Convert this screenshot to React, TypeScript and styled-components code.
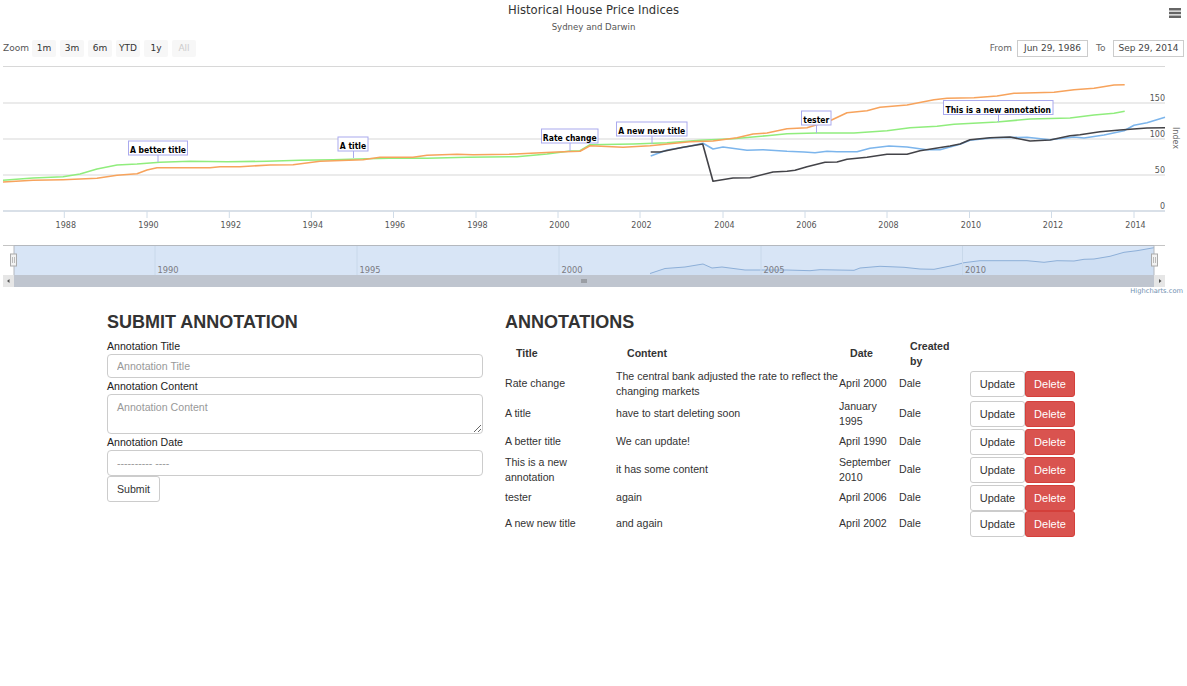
import React from "react";
import styled, { createGlobalStyle } from "styled-components";

const CHART_FONT = `"DejaVu Sans", Verdana, sans-serif`;

const GlobalStyle = createGlobalStyle`
  html, body {
    margin: 0;
    padding: 0;
    background: #fff;
    font-family: "Liberation Sans", Arial, sans-serif;
    font-size: 10.6px;
    line-height: 15px;
    color: #333;
  }
`;

const ChartBlock = styled.section`
  position: relative;
  height: 297px;
`;

const ChartTitle = styled.h1`
  margin: 0;
  padding-top: 3px;
  height: 16px;
  font-family: ${CHART_FONT};
  font-size: 11.6px;
  line-height: 15px;
  font-weight: 400;
  text-align: center;
  color: #333;
`;

const ChartSubtitle = styled.h2`
  margin: 1px 0 0;
  height: 20px;
  font-family: ${CHART_FONT};
  font-size: 8.6px;
  line-height: 14px;
  font-weight: 400;
  text-align: center;
  color: #555;
`;

const MenuButton = styled.svg`
  position: absolute;
  top: 8px;
  left: 1169px;
`;

const Toolbar = styled.div`
  display: flex;
  align-items: center;
  height: 17px;
  padding: 0 3px;
  font-family: ${CHART_FONT};
  font-size: 9px;
  color: #555;
`;

const ZoomLabel = styled.span`
  width: 29px;
`;

const ZoomButton = styled.span<{ $off?: boolean }>`
  width: 24px;
  height: 17px;
  margin-right: 4px;
  line-height: 17px;
  text-align: center;
  background: #f7f7f7;
  border-radius: 2px;
  color: ${(p) => (p.$off ? "#cccccc" : "#333")};
`;

const RangeGroup = styled.div`
  display: flex;
  align-items: center;
  margin-left: auto;
`;

const RangeLabel = styled.span`
  min-width: 12px;
  margin: 0 5px 0 8px;
  color: #666;
`;

const RangeInput = styled.span`
  box-sizing: border-box;
  width: 71px;
  height: 17px;
  line-height: 15px;
  text-align: center;
  border: 1px solid #ccc;
  color: #444;
`;

const ChartSvg = styled.svg`
  display: block;
  position: absolute;
  left: 0;
  top: 60px;
  font-family: ${CHART_FONT};
`;

const Content = styled.main`
  display: flex;
  gap: 22px;
  padding: 15px 0 0 107px;
`;

const FormColumn = styled.form`
  width: 376px;
`;

const TableColumn = styled.div`
  width: 570px;
`;

const Heading = styled.h3`
  margin: 0 0 6px;
  font-size: 18px;
  line-height: 20px;
  font-weight: 700;
  color: #333;
`;

const FieldLabel = styled.label`
  display: block;
  height: 15.5px;
  line-height: 17px;
  color: #222;
`;

const TextInput = styled.input<{ $tall?: boolean }>`
  display: block;
  box-sizing: border-box;
  width: 100%;
  height: ${(p) => (p.$tall ? 26 : 24.5)}px;
  padding: 0 9px;
  font: inherit;
  color: #555;
  background: #fff;
  border: 1px solid #ccc;
  border-radius: 4px;
  outline: none;

  &::placeholder {
    color: #999;
  }
`;

const TextArea = styled.textarea`
  display: block;
  box-sizing: border-box;
  width: 100%;
  height: 40.5px;
  padding: 5px 9px;
  font: inherit;
  color: #555;
  background: #fff;
  border: 1px solid #ccc;
  border-radius: 4px;
  outline: none;

  &::placeholder {
    color: #999;
  }
`;

const ActionButton = styled.button<{ $danger?: boolean }>`
  display: inline-block;
  box-sizing: border-box;
  height: 26px;
  padding: 0;
  font: inherit;
  vertical-align: middle;
  border-radius: 3px;
  border: 1px solid ${(p) => (p.$danger ? "#d43f3a" : "#ccc")};
  background: ${(p) => (p.$danger ? "#d9534f" : "#fff")};
  color: ${(p) => (p.$danger ? "#fff" : "#333")};
  width: ${(p) => (p.$danger ? 50 : 55)}px;
`;

const SubmitButton = styled(ActionButton)`
  display: block;
  width: 53px;
  margin-top: 0.5px;
`;

const AnnotationTable = styled.table`
  width: 570px;
  table-layout: fixed;
  border-collapse: collapse;
  border-spacing: 0;
  margin-top: 7px;
`;

const HeadCell = styled.th`
  padding: 0 11px 1px;
  line-height: 14.5px;
  text-align: left;
  vertical-align: middle;
  font-weight: 700;
  color: #333;
`;

const Cell = styled.td`
  padding: 0 0 1px;
  line-height: 14.5px;
  vertical-align: middle;
  color: #333;
`;

const ActionCell = styled(Cell)`
  padding: 0;
  white-space: nowrap;
  font-size: 0;

  button {
    font-size: 11px;
  }
`;

type Point = [number, number];

const green: Point[] = [
  [3, 180.3], [33, 178], [63, 176.7], [80, 174], [97, 169], [117, 165], [137, 164], [160, 162.3],
  [190, 161.3], [227, 161.7], [267, 161.3], [300, 160.3], [333, 159.7], [367, 158.7], [400, 158],
  [427, 158.3], [467, 157.3], [517, 156.7], [547, 154], [570, 151], [580, 150.7], [590, 144.7],
  [633, 144], [667, 142.7], [700, 140.3], [733, 138.7], [767, 135.7], [787, 133.7], [817, 133],
  [854, 133], [887, 130.7], [910, 127.7], [937, 126.3], [954, 124.3], [997, 122], [1030, 119],
  [1070, 118], [1094, 115], [1114, 113.3], [1124.7, 111.3],
];

const orange: Point[] = [
  [3, 182], [33, 180.3], [63, 179.7], [97, 178.3], [117, 175.3], [137, 173.7], [147, 170], [157, 167.7],
  [210, 167.7], [220, 166.7], [240, 166.7], [270, 165], [293, 164.7], [320, 161.3], [363, 159.7],
  [380, 157.3], [413, 157.3], [427, 155.3], [457, 154.3], [473, 154.7], [510, 154.3], [557, 152],
  [580, 151.3], [590, 145.7], [623, 147.3], [650, 145.7], [690, 141.7], [713, 141], [737, 137.7],
  [753, 134], [767, 133], [787, 128.7], [807, 127.7], [830, 120.7], [847, 112.7], [867, 110.7],
  [880, 107.3], [907, 105], [934, 99.7], [947, 98.3], [974, 97.7], [997, 96], [1014, 93.3],
  [1054, 92.3], [1074, 89.7], [1094, 88.3], [1114, 85], [1124.7, 84.7],
];

const blue: Point[] = [
  [650.7, 156], [667, 150], [687, 146.7], [703, 143.3], [713, 149], [723, 147], [747, 150.3],
  [763, 149.7], [787, 151.3], [804, 152], [815, 152.7], [827, 151.3], [837, 151.7], [857, 151.7],
  [870, 148.3], [889, 146], [907, 147], [927, 149.7], [940, 149.7], [960, 144.3], [970, 140.3],
  [994, 137.7], [1027, 137.3], [1050, 139.7], [1074, 137], [1084, 138], [1104, 135], [1124, 130.7],
  [1134, 125.3], [1147, 122.7], [1165, 117.3],
];

const black: Point[] = [
  [650.7, 152], [660, 152], [683, 147.3], [702.7, 144], [713, 181.3], [733, 178], [750, 177.7],
  [773, 172], [787, 171.3], [795, 170.3], [807, 166.7], [825, 162.3], [837, 162], [847, 159.3],
  [867, 157.3], [887, 154.3], [907, 154.3], [920, 150.7], [950, 146], [960, 144], [970, 139.7],
  [990, 137.7], [1010, 137], [1030, 141], [1050, 140], [1070, 135.7], [1080, 134.7], [1100, 131.7],
  [1120, 130], [1147, 128], [1165, 127.7],
];

const navigatorLine: Point[] = [
  [650, 273.5], [665, 268.5], [685, 267], [703, 264], [712, 268], [722, 267], [745, 270], [787, 270],
  [810, 270.7], [820, 269.7], [854, 270.3], [860, 268], [880, 266.3], [904, 267.3], [920, 269],
  [934, 269.3], [954, 265.3], [964, 262.7], [980, 260.7], [1027, 260.7], [1044, 262.3], [1057, 260.7],
  [1074, 261], [1084, 259.3], [1094, 259], [1110, 256.3], [1124, 252.3], [1137, 250.7], [1154, 247.7],
];

const toPoints = (line: Point[]) => line.map((p) => p.join(",")).join(" ");

const gridRows = [66.5, 103, 139, 175];
const yLabels = [
  { y: 101, text: "150" },
  { y: 137, text: "100" },
  { y: 173, text: "50" },
  { y: 209, text: "0" },
];
const xTicks = [
  [64.3, "1988"], [147, "1990"], [229.3, "1992"], [311.3, "1994"], [393.5, "1996"], [476, "1998"],
  [558, "2000"], [640, "2002"], [723, "2004"], [805, "2006"], [887, "2008"], [969.5, "2010"],
  [1051.5, "2012"], [1134, "2014"],
] as const;
const navTicks = [
  [155, "1990"], [357, "1995"], [559, "2000"], [761, "2005"], [962.5, "2010"],
] as const;

const flags = [
  { x: 128.5, y: 141, w: 59, tip: 158, end: 162, text: "A better title" },
  { x: 338, y: 137, w: 30, tip: 353.5, end: 158, text: "A title" },
  { x: 541.5, y: 129, w: 56.5, tip: 570, end: 151, text: "Rate change" },
  { x: 616.5, y: 122, w: 70.5, tip: 652, end: 144, text: "A new new title" },
  { x: 801.5, y: 111, w: 29.5, tip: 816.5, end: 133, text: "tester" },
  { x: 943.5, y: 100.5, w: 109.5, tip: 998.5, end: 122, text: "This is a new annotation" },
];

const rows = [
  { title: "Rate change", content: "The central bank adjusted the rate to reflect the changing markets", date: "April 2000" },
  { title: "A title", content: "have to start deleting soon", date: "January 1995" },
  { title: "A better title", content: "We can update!", date: "April 1990" },
  { title: "This is a new annotation", content: "it has some content", date: "September 2010" },
  { title: "tester", content: "again", date: "April 2006" },
  { title: "A new new title", content: "and again", date: "April 2002" },
];

const HouseChart: React.FC = () => (
  <ChartSvg width={1187} height={237} viewBox="0 60 1187 237">
    {gridRows.map((y) => (
      <line key={y} x1={3} x2={1165} y1={y} y2={y} stroke="#d8d8d8" strokeWidth={1.2} />
    ))}
    <line x1={3} x2={1165} y1={211} y2={211} stroke="#ccd6e0" strokeWidth={1.4} />
    {xTicks.map(([x, label]) => (
      <g key={label}>
        <line x1={x} x2={x} y1={211} y2={218} stroke="#d0dce8" />
        <text x={x + 1.5} y={227.5} fontSize={8} textAnchor="middle" fill="#555">
          {label}
        </text>
      </g>
    ))}
    {yLabels.map((l) => (
      <text key={l.text} x={1165} y={l.y} fontSize={8} textAnchor="end" fill="#555">
        {l.text}
      </text>
    ))}
    <text x={1173} y={138} fontSize={8} textAnchor="middle" fill="#666" transform="rotate(90 1173 138)">
      Index
    </text>

    <polyline points={toPoints(green)} fill="none" stroke="#90ed7d" strokeWidth={1.6} strokeLinejoin="round" />
    <polyline points={toPoints(blue)} fill="none" stroke="#7cb5ec" strokeWidth={1.6} strokeLinejoin="round" />
    <polyline points={toPoints(black)} fill="none" stroke="#434348" strokeWidth={1.6} strokeLinejoin="round" />
    <polyline points={toPoints(orange)} fill="none" stroke="#f7a35c" strokeWidth={1.6} strokeLinejoin="round" />

    {flags.map((f) => (
      <g key={f.text}>
        <line x1={f.tip} x2={f.tip} y1={f.y + 14} y2={f.end} stroke="#aaaaee" />
        <rect x={f.x} y={f.y} width={f.w} height={14} fill="#fff" stroke="#aaaaee" />
        <text
          x={f.x + f.w / 2}
          y={f.y + 12}
          fontSize={8.5}
          fontWeight={700}
          fontStretch="condensed"
          textAnchor="middle"
          fill="#000"
        >
          {f.text}
        </text>
      </g>
    ))}

    <rect x={14} y={246} width={1140} height={29} fill="#d8e5f6" />
    <polygon points={`${toPoints(navigatorLine)} 1154,275 650,275`} fill="#cfdff3" />
    <polyline points={toPoints(navigatorLine)} fill="none" stroke="#8dafd8" strokeWidth={1} strokeLinejoin="round" />
    {navTicks.map(([x, label]) => (
      <g key={label}>
        <line x1={x} x2={x} y1={246} y2={275} stroke="#c8d8ea" />
        <text x={x + 2.5} y={272.5} fontSize={8.3} fill="#7b7b82">
          {label}
        </text>
      </g>
    ))}
    <line x1={3} x2={14} y1={245.5} y2={245.5} stroke="#c4c4c4" />
    <line x1={14} x2={14} y1={245.5} y2={275} stroke="#b4b8be" />
    <line x1={14} x2={1154} y1={245.5} y2={245.5} stroke="#b4b8be" />
    <line x1={1154} x2={1165} y1={245.5} y2={245.5} stroke="#c4c4c4" />
    <line x1={1154} x2={1154} y1={245.5} y2={275} stroke="#b4b8be" />

    <rect x={14} y={275} width={1140} height={12} fill="#bfc5cf" />
    <rect x={3} y={275} width={11} height={12} fill="#e6e6e6" />
    <rect x={1154} y={275} width={11} height={12} fill="#e6e6e6" />
    <path d="M9.5 279v4l-2.5-2z" fill="#555" />
    <path d="M1159 279v4l2.5-2z" fill="#555" />
    <path d="M582 279v4M584 279v4M586 279v4" stroke="#666" strokeWidth={0.8} />

    <rect x={10.5} y={254} width={6} height={12} fill="#f2f2f2" stroke="#aaa" />
    <rect x={1151.5} y={254} width={6} height={12} fill="#f2f2f2" stroke="#aaa" />
    <path d="M12.5 257v6M14.5 257v6M1153.5 257v6M1155.5 257v6" stroke="#bbb" />

    <text x={1183} y={293} fontSize={6.7} textAnchor="end" fill="#6f8fb0">
      Highcharts.com
    </text>
  </ChartSvg>
);

const App: React.FC = () => (
  <>
    <GlobalStyle />
    <ChartBlock>
      <ChartTitle>Historical House Price Indices</ChartTitle>
      <ChartSubtitle>Sydney and Darwin</ChartSubtitle>
      <MenuButton width={12} height={10} viewBox="0 0 12 10">
        <path d="M0 0h12v2.4H0zM0 3.8h12v2.4H0zM0 7.6h12V10H0z" fill="#666" />
      </MenuButton>
      <Toolbar>
        <ZoomLabel>Zoom</ZoomLabel>
        <ZoomButton>1m</ZoomButton>
        <ZoomButton>3m</ZoomButton>
        <ZoomButton>6m</ZoomButton>
        <ZoomButton>YTD</ZoomButton>
        <ZoomButton>1y</ZoomButton>
        <ZoomButton $off>All</ZoomButton>
        <RangeGroup>
          <RangeLabel>From</RangeLabel>
          <RangeInput>Jun 29, 1986</RangeInput>
          <RangeLabel>To</RangeLabel>
          <RangeInput>Sep 29, 2014</RangeInput>
        </RangeGroup>
      </Toolbar>
      <HouseChart />
    </ChartBlock>

    <Content>
      <FormColumn>
        <Heading>SUBMIT ANNOTATION</Heading>
        <FieldLabel>Annotation Title</FieldLabel>
        <TextInput placeholder="Annotation Title" />
        <FieldLabel>Annotation Content</FieldLabel>
        <TextArea placeholder="Annotation Content" />
        <FieldLabel>Annotation Date</FieldLabel>
        <TextInput $tall placeholder="---------- ----" />
        <SubmitButton type="button">Submit</SubmitButton>
      </FormColumn>

      <TableColumn>
        <Heading>ANNOTATIONS</Heading>
        <AnnotationTable>
          <colgroup>
            <col width={111} />
            <col width={223} />
            <col width={60} />
            <col width={71} />
            <col width={105} />
          </colgroup>
          <thead>
            <tr>
              <HeadCell>Title</HeadCell>
              <HeadCell>Content</HeadCell>
              <HeadCell>Date</HeadCell>
              <HeadCell>Created by</HeadCell>
              <HeadCell />
            </tr>
          </thead>
          <tbody>
            {rows.map((row) => (
              <tr key={row.title}>
                <Cell>{row.title}</Cell>
                <Cell>{row.content}</Cell>
                <Cell>{row.date}</Cell>
                <Cell>Dale</Cell>
                <ActionCell>
                  <ActionButton type="button">Update</ActionButton>
                  <ActionButton type="button" $danger>
                    Delete
                  </ActionButton>
                </ActionCell>
              </tr>
            ))}
          </tbody>
        </AnnotationTable>
      </TableColumn>
    </Content>
  </>
);

export default App;
